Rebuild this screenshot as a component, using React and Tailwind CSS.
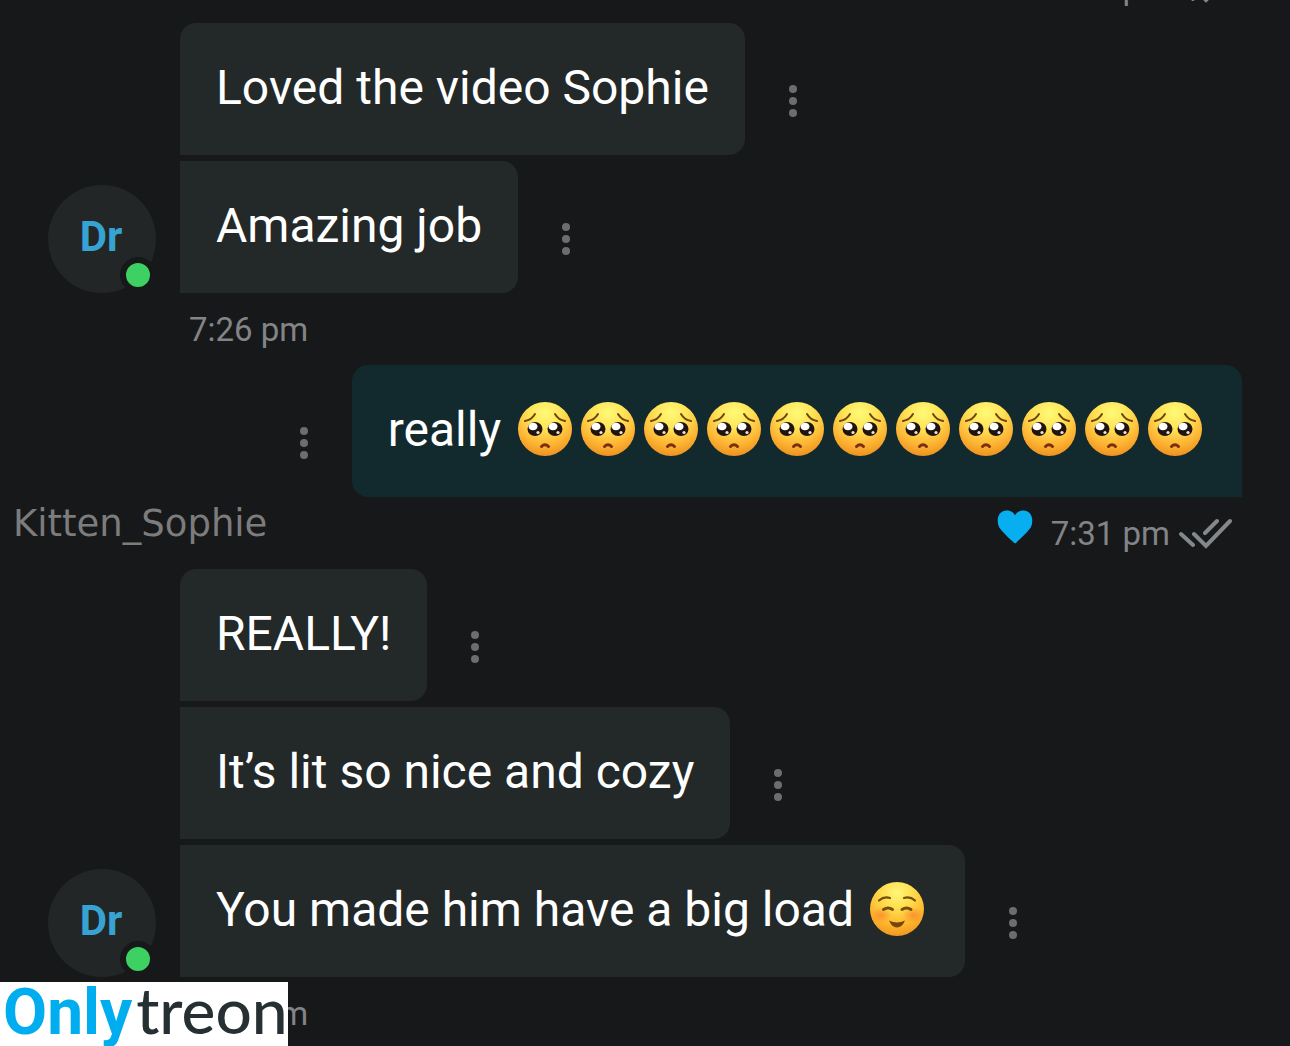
function PleadingFace() {
  return (
    <svg viewBox="0 0 63 56" className="w-[63px] h-14 shrink-0" role="img" aria-label="pleading face">
      <defs>
        <radialGradient id="pleading" cx="0.5" cy="0.2" r="0.85">
          <stop offset="0" stopColor="#fffa78" />
          <stop offset="0.35" stopColor="#ffe356" />
          <stop offset="0.7" stopColor="#fdb433" />
          <stop offset="1" stopColor="#e98a1c" />
        </radialGradient>
      </defs>
      <circle cx="32" cy="28" r="27" fill="url(#pleading)" />
      <path d="M12 20q6.500-1 10-7M52 20q-6.500-1-10-7" fill="none" stroke="#6b450f" strokeWidth="2" strokeLinecap="round" />
      <ellipse cx="22" cy="28" rx="7.500" ry="7" fill="#21140f" />
      <ellipse cx="42" cy="28" rx="7.500" ry="7" fill="#21140f" />
      <ellipse cx="20" cy="25.500" rx="4.500" ry="3.800" fill="#fff" />
      <ellipse cx="40" cy="25.500" rx="4.500" ry="3.800" fill="#fff" />
      <circle cx="25" cy="31.500" r="1.600" fill="#e8e4e2" />
      <circle cx="45" cy="31.500" r="1.600" fill="#e8e4e2" />
      <path d="M28.500 45.500q3.500-3.500 7 0" fill="none" stroke="#7a2f12" strokeWidth="3" strokeLinecap="round" />
    </svg>
  )
}

function SmilingFace() {
  return (
    <svg viewBox="0 0 63 56" className="w-[63px] h-14 shrink-0" role="img" aria-label="smiling face">
      <defs>
        <radialGradient id="smiling" cx="0.5" cy="0.2" r="0.85">
          <stop offset="0" stopColor="#fff67a" />
          <stop offset="0.35" stopColor="#ffdc4c" />
          <stop offset="0.7" stopColor="#fdb62d" />
          <stop offset="1" stopColor="#ec921c" />
        </radialGradient>
        <radialGradient id="blush">
          <stop offset="0" stopColor="#f9742a" stopOpacity="0.6" />
          <stop offset="1" stopColor="#f9742a" stopOpacity="0" />
        </radialGradient>
      </defs>
      <circle cx="31" cy="28" r="27" fill="url(#smiling)" />
      <ellipse cx="15" cy="34" rx="11" ry="8" fill="url(#blush)" />
      <ellipse cx="47" cy="34" rx="11" ry="8" fill="url(#blush)" />
      <g fill="none" stroke="#74500f" strokeLinecap="round">
        <path d="M13 19.500q5-4.500 11-2.500M38 17q6-2 11 2.500" strokeWidth="2.200" />
        <path d="M17.500 28.500q4.500-3 9 0M36 28.500q4.500-3 9 0" strokeWidth="3" />
      </g>
      <path d="M23 39.500q8 4 16 0q-3 7-8 7t-8-7z" fill="#74450c" />
    </svg>
  )
}

function MenuDots() {
  return (
    <button type="button" aria-label="Message options" className="mt-6 shrink-0">
      <svg viewBox="0 0 8 32" className="w-2 h-8" fill="#6c6d6f">
        <circle cx="4" cy="4" r="4" />
        <circle cx="4" cy="16" r="4" />
        <circle cx="4" cy="28" r="4" />
      </svg>
    </button>
  )
}

function Avatar() {
  return (
    <div className="relative size-[108px] rounded-full bg-[#222627] flex items-center justify-center">
      <span className="pb-1 pr-0.5 text-[42px] leading-12 font-bold text-[#36a3d3]">Dr</span>
      <span className="absolute right-0 bottom-0 size-9 rounded-full border-6 border-[#171819] bg-[#3dd163]" />
    </div>
  )
}

function Received({ first, avatar, children }) {
  return (
    <div className="flex items-center gap-6 pl-12">
      <div className="w-[108px] shrink-0 self-end">{avatar && <Avatar />}</div>
      <div className="flex items-center gap-11">
        <div
          className={`flex items-start bg-[#232829] px-9 pt-9 pb-[38px] rounded-r-2xl ${first ? 'rounded-tl-2xl' : ''}`}
        >
          {children}
        </div>
        <MenuDots />
      </div>
    </div>
  )
}

function Sent({ children }) {
  return (
    <div className="flex items-center justify-end gap-11 pr-12">
      <MenuDots />
      <div className="flex items-start bg-[#12292e] px-9 pt-9 pb-[38px] rounded-t-2xl rounded-bl-2xl">{children}</div>
    </div>
  )
}

function ReceivedTime({ time }) {
  return (
    <div className="h-[72px] pl-[189px] pt-[17px]">
      <time className="block text-[33px] leading-10 text-[#828487]">{time}</time>
    </div>
  )
}

function SentTime({ time, liked }) {
  return (
    <div className="h-[72px] pr-[58px] pt-[17px] flex justify-end items-start">
      {liked && (
        <svg viewBox="0 0 36 34" className="w-9 h-[34px] mr-[18px] -mt-1" fill="#08aff0" role="img" aria-label="liked">
          <path d="M18 33.500C16 32 4 21 2 17C-1 10 1 1 9.500 .5C14 .3 17 3 18 5.500C19 3 22 .3 26.500 .5C35 1 37 10 34 17C32 21 20 32 18 33.500Z" />
        </svg>
      )}
      <time className="text-[33px] leading-10 text-[#828487]">{time}</time>
      <svg viewBox="0 0 54 32" className="w-[54px] h-8 ml-2 mt-1" fill="none" stroke="#85888a" strokeWidth="4" strokeLinecap="round" role="img" aria-label="read">
        <path d="M3 16L15 27M16 16L28 28L52 3M27 15L39 3" />
      </svg>
    </div>
  )
}

export default function App() {
  return (
    <div className="relative h-screen overflow-hidden bg-[#171819] font-['Roboto',sans-serif] text-5xl leading-[58px] text-white">
      <main className="-mt-[49px]">
        <SentTime time="7:25 pm" />
        <section className="flex flex-col gap-1.5">
          <Received first>Loved the video Sophie</Received>
          <Received avatar>Amazing job</Received>
        </section>
        <ReceivedTime time="7:26 pm" />
        <Sent>
          <span className="whitespace-pre">really </span>
          {Array.from({ length: 11 }, (_, i) => (
            <PleadingFace key={i} />
          ))}
        </Sent>
        <SentTime time="7:31 pm" liked />
        <section className="flex flex-col gap-1.5">
          <Received first>REALLY!</Received>
          <Received>It’s lit so nice and cozy</Received>
          <Received avatar>
            <span className="whitespace-pre">You made him have a big load </span>
            <SmilingFace />
          </Received>
        </section>
        <ReceivedTime time="7:32 pm" />
      </main>

      <p className="absolute left-[13px] top-[502px] font-['DejaVu_Sans',sans-serif] text-[37px] leading-11 text-[#7c7c7d]">
        Kitten_Sophie
      </p>
      <div className="absolute left-0 bottom-0 w-72 h-16 bg-white flex items-baseline gap-1 pl-[3px] text-[64px] leading-14">
        <span className="font-bold text-[#00aeef]">Only</span>
        <span className="font-['Lato',sans-serif] font-medium text-[#263033]">treon</span>
      </div>
    </div>
  )
}
